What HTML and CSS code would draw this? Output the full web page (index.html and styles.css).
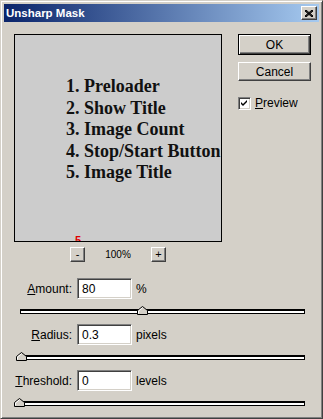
FILE: index.html
```html
<!DOCTYPE html>
<html lang="en">
<head>
<meta charset="UTF-8">
<title>Unsharp Mask</title>
<link rel="stylesheet" href="styles.css">
</head>
<body>
    <div class="window">
        <div class="titlebar">
            <span class="title">Unsharp Mask</span>
            <div class="close-btn">
                <svg width="8" height="7" viewBox="0 0 8 7"><path d="M0 0 L8 7 M1 0 L8 6 M0 1 L7 7 M8 0 L0 7 M7 0 L0 6 M8 1 L1 7" stroke="#000" stroke-width="1"/></svg>
            </div>
        </div>
        <div class="content">
            <div class="top-section">
                <div class="preview-col">
                    <div class="preview">
                        <ol class="feature-list">
                            <li>1. Preloader</li>
                            <li>2. Show Title</li>
                            <li>3. Image Count</li>
                            <li>4. Stop/Start Button</li>
                            <li>5. Image Title</li>
                        </ol>
                        <span class="red-mark">5</span>
                    </div>
                    <div class="zoom-row">
                        <div class="small-btn">-</div>
                        <span class="zoom-value">100%</span>
                        <div class="small-btn">+</div>
                    </div>
                </div>
                <div class="side-col">
                    <div class="btn btn-default"><span>OK</span></div>
                    <div class="btn"><span>Cancel</span></div>
                    <label class="check-row">
                        <span class="checkbox">
                            <svg width="9" height="9" viewBox="0 0 9 9"><path d="M1 3 L3 5 L7 1 L7 3 L3 7 L1 5 Z" fill="#000"/></svg>
                        </span>
                        <span><u>P</u>review</span>
                    </label>
                </div>
            </div>

            <div class="field">
                <span class="field-label"><u>A</u>mount:</span>
                <span class="text-box">80</span>
                <span class="unit">%</span>
            </div>
            <div class="slider">
                <div class="track"></div>
                <svg class="thumb" style="left: 117px" width="11" height="9" viewBox="0 0 11 9"><path d="M0.5 8.5 V4.5 L5.5 0.5 L10.5 4.5 V8.5 Z" fill="#d4d0c8" stroke="#000"/><path d="M1.5 7.5 V5 L5.5 1.8" fill="none" stroke="#fff"/></svg>
            </div>

            <div class="field">
                <span class="field-label"><u>R</u>adius:</span>
                <span class="text-box">0.3</span>
                <span class="unit">pixels</span>
            </div>
            <div class="slider">
                <div class="track"></div>
                <svg class="thumb" style="left: -4px" width="11" height="9" viewBox="0 0 11 9"><path d="M0.5 8.5 V4.5 L5.5 0.5 L10.5 4.5 V8.5 Z" fill="#d4d0c8" stroke="#000"/><path d="M1.5 7.5 V5 L5.5 1.8" fill="none" stroke="#fff"/></svg>
            </div>

            <div class="field">
                <span class="field-label"><u>T</u>hreshold:</span>
                <span class="text-box">0</span>
                <span class="unit">levels</span>
            </div>
            <div class="slider slider-wide">
                <div class="track"></div>
                <svg class="thumb" style="left: -2px" width="11" height="9" viewBox="0 0 11 9"><path d="M0.5 8.5 V4.5 L5.5 0.5 L10.5 4.5 V8.5 Z" fill="#d4d0c8" stroke="#000"/><path d="M1.5 7.5 V5 L5.5 1.8" fill="none" stroke="#fff"/></svg>
            </div>
        </div>
    </div>
</body>
</html>
```

FILE: styles.css
```css
body {
    margin: 0;
    padding: 0;
    background-color: #d4d0c8;
    font-family: "Liberation Sans", Arial, sans-serif;
    font-size: 12px;
    color: #000;
}
.window {
    width: 323px;
    height: 419px;
    box-sizing: border-box;
    border: 1px solid;
    border-color: #d4d0c8 #404040 #404040 #d4d0c8;
    box-shadow: inset 1px 1px #fff, inset -1px -1px #808080;
    padding: 3px;
    background-color: #d4d0c8;
}
.titlebar {
    height: 18px;
    display: flex;
    align-items: center;
    justify-content: space-between;
    padding-left: 2px;
    background: linear-gradient(to right, #0a246a, #a6caf0);
}
.title {
    color: #fff;
    font-weight: bold;
    font-size: 11.5px;
}
.close-btn {
    width: 16px;
    height: 14px;
    box-sizing: border-box;
    margin-right: 2px;
    background-color: #d4d0c8;
    border: 1px solid;
    border-color: #fff #404040 #404040 #fff;
    box-shadow: inset -1px -1px #808080;
    display: flex;
    align-items: center;
    justify-content: center;
}
.content {
    padding: 12px 0 0 10px;
}
.top-section {
    display: flex;
    gap: 16px;
}
.preview {
    position: relative;
    width: 208px;
    height: 208px;
    box-sizing: border-box;
    border: 1px solid #000;
    background-color: #cccccc;
    overflow: hidden;
}
.feature-list {
    list-style: none;
    margin: 0;
    padding: 41px 0 0 51px;
    font-family: "Liberation Serif", "Times New Roman", serif;
    font-weight: bold;
    font-size: 18px;
    line-height: 21.5px;
    color: #111;
    white-space: nowrap;
}
.red-mark {
    position: absolute;
    left: 60px;
    bottom: -5px;
    color: #e00000;
    font-weight: bold;
    font-size: 11px;
}
.zoom-row {
    display: flex;
    align-items: center;
    margin-top: 5px;
    padding-left: 56px;
}
.small-btn {
    width: 15px;
    height: 15px;
    box-sizing: border-box;
    border: 1px solid;
    border-color: #fff #404040 #404040 #fff;
    box-shadow: inset -1px -1px #808080;
    font-size: 11px;
    line-height: 12px;
    text-align: center;
}
.zoom-value {
    width: 66px;
    text-align: center;
    font-size: 10px;
}
.side-col {
    display: flex;
    flex-direction: column;
    width: 73px;
}
.btn {
    height: 19px;
    box-sizing: border-box;
    border: 1px solid;
    border-color: #fff #404040 #404040 #fff;
    box-shadow: inset -1px -1px #808080;
    display: flex;
    align-items: center;
    justify-content: center;
    margin-bottom: 8px;
}
.btn-default {
    height: 21px;
    border: 1px solid #000;
    box-shadow: inset 1px 1px #fff, inset -1px -1px #404040, inset -2px -2px #808080;
    margin-bottom: 7px;
}
.check-row {
    display: flex;
    align-items: center;
    gap: 4px;
    margin-top: 7px;
}
.checkbox {
    width: 13px;
    height: 13px;
    box-sizing: border-box;
    border: 1px solid;
    border-color: #808080 #fff #fff #808080;
    box-shadow: inset 1px 1px #404040, inset -1px -1px #d4d0c8;
    background-color: #fff;
    display: flex;
    align-items: center;
    justify-content: center;
}
.field {
    display: flex;
    align-items: center;
    gap: 5px;
    height: 21px;
}
.top-section + .field {
    margin-top: 16px;
}
.field-label {
    width: 58px;
    text-align: right;
}
.text-box {
    width: 55px;
    height: 21px;
    box-sizing: border-box;
    border: 1px solid;
    border-color: #808080 #fff #fff #808080;
    box-shadow: inset 1px 1px #404040, inset -1px -1px #d4d0c8;
    background-color: #fff;
    padding: 3px 0 0 4px;
}
.unit {
    margin-left: -1px;
}
.slider {
    position: relative;
    height: 25px;
    margin-left: 6px;
    width: 285px;
}
.slider-wide {
    margin-left: 2px;
    width: 289px;
}
.track {
    position: relative;
    top: 10px;
    height: 4px;
    border: 1px solid #000;
    border-top-width: 2px;
    background-color: #fff;
    box-sizing: border-box;
    height: 5px;
}
.thumb {
    position: absolute;
    top: 7px;
}
```
